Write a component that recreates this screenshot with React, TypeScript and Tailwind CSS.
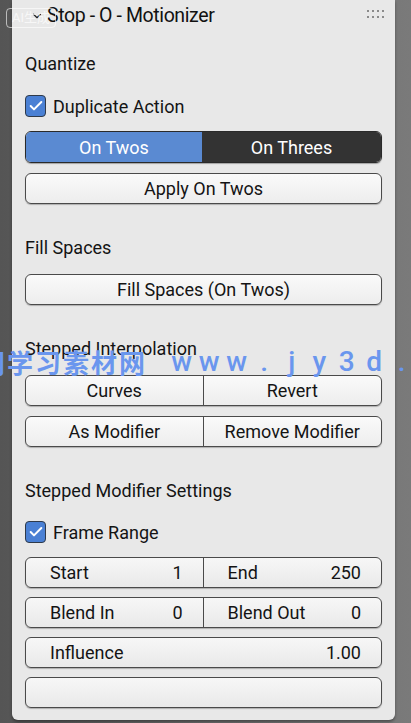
import { Check, ChevronDown } from 'lucide-react';

const font = { fontFamily: 'Roboto, "Liberation Sans", "Noto Sans CJK SC", sans-serif' };

const cnChars = ['网', '学', '习', '素', '材', '网'];
const urlChars = ['w', 'w', 'w', '.', 'j', 'y', '3', 'd', '.'];

function Checkbox({ label }: { label: string }) {
  return (
    <div className="flex items-center gap-[7px] h-[22px]">
      <span className="w-[21px] h-[22px] rounded-[4px] bg-[#4a80d4] border-[1.5px] border-[#2f3a4a] flex items-center justify-center">
        <Check className="w-[16px] h-[16px] text-white" strokeWidth={3} />
      </span>
      <span className="text-[18px] text-[#141414]">{label}</span>
    </div>
  );
}

function Button({ label }: { label: string }) {
  return (
    <button className="h-[31px] w-full rounded-[6px] border-[1.5px] border-[#4a4a4a] bg-gradient-to-b from-[#fafafa] to-[#ededed] text-[18px] text-[#141414] shadow-[0_1px_1px_rgba(0,0,0,0.25)]">
      {label}
    </button>
  );
}

function Pair({ left, right }: { left: string; right: string }) {
  return (
    <div className="h-[31px] grid grid-cols-2 rounded-[6px] border-[1.5px] border-[#4a4a4a] bg-gradient-to-b from-[#fafafa] to-[#ededed] shadow-[0_1px_1px_rgba(0,0,0,0.25)] overflow-hidden">
      <div className="flex items-center justify-center text-[18px] text-[#141414] border-r-[1.5px] border-[#4a4a4a]">{left}</div>
      <div className="flex items-center justify-center text-[18px] text-[#141414]">{right}</div>
    </div>
  );
}

function Field({ label, value, divider }: { label: string; value: string; divider?: boolean }) {
  return (
    <div className={`flex items-center justify-between pl-[24px] pr-[20px] text-[18px] text-[#141414] ${divider ? 'border-r-[1.5px] border-[#4a4a4a]' : ''}`}>
      <span>{label}</span>
      <span>{value}</span>
    </div>
  );
}

function FieldRow({ cols = 2, children }: { cols?: 1 | 2; children?: React.ReactNode }) {
  return (
    <div className={`h-[31px] grid ${cols === 2 ? 'grid-cols-2' : 'grid-cols-1'} rounded-[6px] border-[1.5px] border-[#4a4a4a] bg-gradient-to-b from-[#f7f7f7] to-[#e9e9e9] shadow-[0_1px_1px_rgba(0,0,0,0.25)] overflow-hidden`}>
      {children}
    </div>
  );
}

export default function App() {
  return (
    <div className="relative w-[411px] h-[723px] overflow-hidden bg-gradient-to-r from-[#555] via-[#6a6a6a] to-[#7a7a7a]" style={font}>
      <div className="ml-[12px] w-[383px] h-[720px] rounded-b-[6px] bg-[#e8e8e8] shadow-[0_2px_3px_rgba(0,0,0,0.35)] pl-[13px] pr-[13px]">
        {/* header */}
        <div className="h-[32px] flex items-center relative">
          <ChevronDown className="w-[14px] h-[14px] text-[#222] ml-[5px]" strokeWidth={2} />
          <span className="ml-[3px] text-[19.5px] tracking-[-0.4px] text-[#111]">Stop - O - Motionizer</span>
          <div className="absolute right-[-2px] top-[10px] grid grid-cols-4 gap-x-[3px] gap-y-[4px]">
            {Array.from({ length: 8 }).map((_, i) => (
              <span key={i} className="w-[2px] h-[2px] bg-[#8a8a8a]" />
            ))}
          </div>
        </div>

        {/* Quantize */}
        <div className="mt-[21px] text-[18px] text-[#141414] leading-[22px]">Quantize</div>
        <div className="mt-[20px]">
          <Checkbox label="Duplicate Action" />
        </div>
        <div className="mt-[14px] h-[32px] flex rounded-[6px] border-[1.5px] border-[#2a2a2a] overflow-hidden shadow-[0_1px_1px_rgba(0,0,0,0.3)]">
          <div className="w-[176px] bg-[#5a8ad2] flex items-center justify-center text-white text-[18px]">On Twos</div>
          <div className="flex-1 bg-[#333333] flex items-center justify-center text-white text-[18px]">On Threes</div>
        </div>
        <div className="mt-[10px]">
          <Button label="Apply On Twos" />
        </div>

        {/* Fill Spaces */}
        <div className="mt-[33px] text-[18px] text-[#141414] leading-[22px]">Fill Spaces</div>
        <div className="mt-[15px]">
          <Button label="Fill Spaces (On Twos)" />
        </div>

        {/* Stepped Interpolation */}
        <div className="mt-[33px] text-[18px] text-[#141414] leading-[22px]">Stepped Interpolation</div>
        <div className="mt-[15px]">
          <Pair left="Curves" right="Revert" />
        </div>
        <div className="mt-[10px]">
          <Pair left="As Modifier" right="Remove Modifier" />
        </div>

        {/* Stepped Modifier Settings */}
        <div className="mt-[33px] text-[18px] text-[#141414] leading-[22px]">Stepped Modifier Settings</div>
        <div className="mt-[19px]">
          <Checkbox label="Frame Range" />
        </div>
        <div className="mt-[14px] flex flex-col gap-[9px]">
          <FieldRow>
            <Field label="Start" value="1" divider />
            <Field label="End" value="250" />
          </FieldRow>
          <FieldRow>
            <Field label="Blend In" value="0" divider />
            <Field label="Blend Out" value="0" />
          </FieldRow>
          <FieldRow cols={1}>
            <Field label="Influence" value="1.00" />
          </FieldRow>
          <FieldRow cols={1} />
        </div>
      </div>

      {/* watermarks */}
      <div className="absolute left-[6px] top-[8px] w-[50px] h-[20px] rounded-[4px] border border-white/60 text-white/70 text-[13px] flex items-center justify-center">AI生成</div>
      <div className="absolute left-[-22px] top-[348px] h-[28px] flex items-center text-[#6a96ee] whitespace-nowrap">
        {cnChars.map((c, i) => (
          <span key={i} className="w-[28px] text-center text-[26px] font-bold leading-none" style={{ fontFamily: '"Noto Sans CJK SC", sans-serif' }}>{c}</span>
        ))}
        <span className="w-[22px]" />
        {urlChars.map((c, i) => (
          <span key={i} className="w-[27.5px] text-center text-[28px] font-medium leading-none">{c}</span>
        ))}
      </div>
    </div>
  );
}
